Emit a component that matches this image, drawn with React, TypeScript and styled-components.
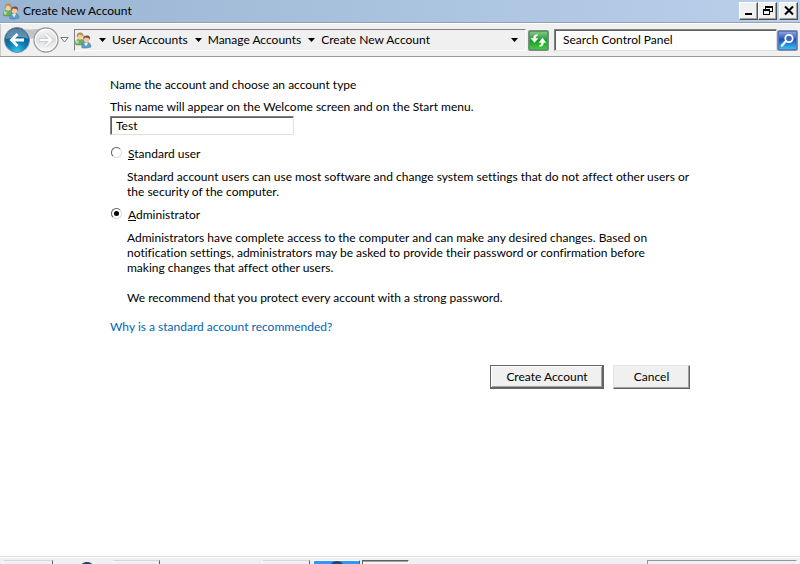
import React, { useState } from "react";
import styled, { createGlobalStyle, css } from "styled-components";

const GlobalStyle = createGlobalStyle`
  *, *::before, *::after { box-sizing: border-box; }
  html, body { margin: 0; padding: 0; background: #fff; }
  body, button, input {
    font-family: Lato, "Open Sans", sans-serif;
    font-size: 12px;
    line-height: 15px;
    font-variant-ligatures: none;
    color: #000;
  }
`;

const Window = styled.div`
  display: flex;
  flex-direction: column;
  min-height: 100vh;
`;

const TitleBar = styled.header`
  display: flex;
  align-items: center;
  height: 22px;
  padding: 0 2px 0 3px;
  background: linear-gradient(90deg, #9ab5d3, #b9d0ea);
`;

const Title = styled.h1`
  flex: 1;
  margin: 0 0 0 3px;
  padding-bottom: 2px;
  font-size: 12px;
  font-weight: 400;
  line-height: 15px;
`;

const WindowButtons = styled.div`
  display: flex;
`;

const WindowButton = styled.button<{ $spaced?: boolean }>`
  display: flex;
  align-items: center;
  justify-content: center;
  width: 19px;
  height: 18px;
  margin-left: ${(p) => (p.$spaced ? "2px" : "0")};
  padding: 0 0 1px;
  border: 1px solid;
  border-color: #fff #505050 #505050 #fff;
  background: #f0f0f0;
  box-shadow: inset -1px -1px #a0a0a0;
`;

const NavBar = styled.nav`
  display: flex;
  align-items: center;
  height: 35px;
  padding: 1px 2px 0 4px;
  border-top: 1px solid #94a0ae;
  border-bottom: 1px solid #989898;
  background: #f0f0f0;
  box-shadow: inset 0 1px #fff, inset 1px 0 #c8c8c8;
`;

const History = styled.div`
  display: flex;
  align-items: center;
  width: 70px;
  flex: none;
`;

const RoundButton = styled.button`
  display: block;
  width: 28px;
  height: 28px;
  padding: 0;
  border: 0;
  border-radius: 50%;
  background: none;
`;

const ArrowButton = styled.button<{ $narrow?: boolean }>`
  display: flex;
  align-items: center;
  justify-content: center;
  width: ${(p) => (p.$narrow ? "9px" : "13px")};
  height: 18px;
  padding: 0;
  border: 0;
  background: none;
`;

const AddressBar = styled.div`
  display: flex;
  align-items: center;
  flex: 2 1 452px;
  min-width: 0;
  height: 22px;
  padding: 0 4px 0 0;
  border: 1px solid;
  border-color: #808080 #fff #fff #808080;
`;

const Crumbs = styled.ol`
  display: flex;
  align-items: center;
  flex: 1;
  min-width: 0;
  margin: 0;
  padding: 0 0 0 4px;
  list-style: none;
`;

const Crumb = styled.li`
  display: flex;
  align-items: center;
  white-space: nowrap;
`;

const CrumbLink = styled.a`
  padding: 0 4px 2px 3px;
  color: #000;
  text-decoration: none;
`;

const SquareButton = styled.button<{ $gap?: boolean }>`
  flex: none;
  display: block;
  width: 21px;
  height: 21px;
  margin-left: ${(p) => (p.$gap ? "2px" : "0")};
  margin-right: ${(p) => (p.$gap ? "5px" : "0")};
  padding: 0;
  border: 0;
  background: none;
`;

const sunken = css`
  border: 1px solid;
  border-color: #808080 #e0e0e0 #e0e0e0 #808080;
  border-radius: 0;
  background: #fff;
  box-shadow: inset 1px 1px #606060;
  outline: none;
`;

const SearchInput = styled.input`
  ${sunken}
  flex: 1 1 223px;
  min-width: 0;
  height: 22px;
  padding: 0 8px 2px;
  &::placeholder { color: #000; opacity: 1; }
`;

const Main = styled.main`
  flex: 1;
  padding: 20px 16px 24px;
`;

const Form = styled.form`
  max-width: 580px;
  margin: 0 auto;
`;

const Heading = styled.h2`
  margin: 0 0 7px;
  font-size: 12px;
  font-weight: 400;
  line-height: 15px;
`;

const NameLabel = styled.label`
  display: block;
  margin-bottom: 2px;
`;

const NameInput = styled.input`
  ${sunken}
  display: block;
  width: 184px;
  height: 19px;
  margin-bottom: 11px;
  padding: 0 5px 1px;
`;

const Option = styled.div`
  margin-bottom: 8px;
`;

const OptionLabel = styled.label`
  display: flex;
  align-items: center;
  width: fit-content;
`;

const Radio = styled.input`
  appearance: none;
  display: grid;
  place-items: center;
  width: 11px;
  height: 11px;
  margin: 0 6px 2px 1px;
  border: 1px solid;
  border-color: #606060 #dcdcdc #dcdcdc #606060;
  border-radius: 50%;
  background: #fff;

  &:checked::before {
    content: "";
    width: 5px;
    height: 5px;
    border-radius: 50%;
    background: #000;
  }
`;

const Description = styled.p`
  margin: 8px 0 0 17px;
`;

const Advice = styled.p`
  margin: 15px 0 14px 17px;
`;

const HelpLink = styled.a`
  color: #0066b5;
  text-decoration: none;
`;

const Actions = styled.div`
  display: flex;
  justify-content: flex-end;
  gap: 9px;
  margin-top: 31px;
`;

const PushButton = styled.button<{ $primary?: boolean }>`
  min-width: ${(p) => (p.$primary ? "114px" : "77px")};
  height: 24px;
  padding: 0 14px 1px;
  border: 1px solid;
  border-color: ${(p) => (p.$primary ? "#646464" : "#e3e3e3 #646464 #646464 #e3e3e3")};
  background: #f0f0f0;
  box-shadow: ${(p) =>
    p.$primary
      ? "inset -1px -1px #646464, inset 1px 1px #fff, inset -2px -2px #a0a0a0"
      : "inset -1px -1px #a0a0a0"};
`;

const TaskBar = styled.footer`
  display: grid;
  grid-template-columns: 50px 60px 47px 102px 48px 3px 47px 2px 47px 1fr 150px;
  height: 8px;
  padding: 3px 3px 0;
  border-top: 1px solid #dce2e2;
  background: #f0f0f2;
  box-shadow: inset 0 1px #fff;
  overflow: hidden;
`;

const Task = styled.div<{ $look: "raised" | "blue" | "pressed" | "tray" }>`
  display: flex;
  justify-content: center;
  border-style: solid;
  border-width: 1px 1px 0;
  ${(p) => p.$look === "raised" && css`border-color: #d8d8d8 #606060 #606060 #fff;`}
  ${(p) => p.$look === "blue" && css`border-color: #fff #606060 #606060 #fff; background: #3296fa;`}
  ${(p) => p.$look === "pressed" && css`border-color: #606060 #fff #fff #606060; background: #f6f6f6; box-shadow: inset 0 1px #a0a0a0;`}
  ${(p) => p.$look === "tray" && css`border-color: #909898 #fff #fff #909898;`}
`;

const TaskSlot = styled.div`
  display: flex;
  justify-content: center;
  padding: 2px 0 0 7px;
`;

const PeopleIcon = () => (
  <svg width="17" height="17" viewBox="0 0 17 17" aria-hidden="true">
    <path d="M.5 12C.5 8 2 7 5 7s5 2 5 5l-4 1H1z" fill="#6fac5c" stroke="#56804d" strokeWidth=".5" />
    <path d="M1 8l3 1-1 3-2-1z" fill="#b4dd9f" />
    <ellipse cx="5" cy="4.5" rx="2.5" ry="3.2" fill="#f1cfa9" />
    <path d="M2 6C1 2 3 .5 5 .5c3 0 4 2 3.5 5L7 3.5 4 2.5z" fill="#b39450" />
    <path d="M7 16c-1-4 1-6 4-6s5 2 5 5l-4 1z" fill="#5c9cc6" stroke="#4472a0" strokeWidth=".5" />
    <path d="M9 11l2 3.5 2-3.5z" fill="#e2f0f5" />
    <ellipse cx="11.5" cy="7.5" rx="2.6" ry="3.4" fill="#f0c8a2" />
    <path d="M8.5 8C7.5 4 10 3.5 12 3.5c3 0 3.5 2 2.5 4.5l-1-2-3.5-.5z" fill="#7b5436" />
  </svg>
);

const BackIcon = () => (
  <svg width="28" height="28" viewBox="0 0 28 28" aria-hidden="true">
    <defs>
      <radialGradient id="back" cx=".5" cy=".95" r=".9">
        <stop offset="0" stopColor="#38c4ee" />
        <stop offset=".45" stopColor="#087ab4" />
        <stop offset="1" stopColor="#14436f" />
      </radialGradient>
    </defs>
    <circle cx="13" cy="14" r="12.5" fill="url(#back)" stroke="#7890a0" />
    <path d="M2 13C2 6 7 2.5 13 2.5S24 6 24 13c-7-3-14-2-22 0z" fill="#fff" opacity=".32" />
    <path d="M20 14H8m5.500-6l-6 6 6 6" fill="none" stroke="#fff" strokeWidth="2.8" />
  </svg>
);

const ForwardIcon = () => (
  <svg width="28" height="28" viewBox="0 0 28 28" overflow="visible" aria-hidden="true">
    <defs>
      <linearGradient id="forward" x2="0" y2="1">
        <stop offset="0" stopColor="#f8f8f8" />
        <stop offset=".5" stopColor="#dedfe1" />
        <stop offset="1" stopColor="#fafafa" />
      </linearGradient>
    </defs>
    <path d="M-9 3C-2 4 6 3 12 2L2 12C0 13-1 13-2.5 12C-3.5 8-6 5-9 3z" fill="#c2c3c5" />
    <circle cx="14" cy="14" r="12" fill="url(#forward)" stroke="#9a9c9f" strokeWidth="1.3" />
    <circle cx="14" cy="14" r="10.8" fill="none" stroke="#fff" />
    <path d="M7 14h12m-5.500-6l6 6-6 6" fill="none" stroke="#c4c6c9" strokeWidth="3.6" />
    <path d="M7.500 14h12m-6-6l6 6-6 6" fill="none" stroke="#fbfbfb" strokeWidth="2.2" />
  </svg>
);

const DownArrow = () => (
  <svg width="7" height="4" viewBox="0 0 7 4" aria-hidden="true">
    <path d="M0 0h7L3.5 4z" fill="#000" />
  </svg>
);

const OutlineArrow = () => (
  <svg width="9" height="6" viewBox="0 0 9 6" aria-hidden="true">
    <path d="M.8.5h7.400L4.500 5z" fill="#fff" stroke="#70757c" />
  </svg>
);

const RefreshIcon = () => (
  <svg width="21" height="21" viewBox="0 0 21 21" aria-hidden="true">
    <defs>
      <linearGradient id="refresh" x2="0" y2="1">
        <stop offset="0" stopColor="#8bc68d" />
        <stop offset=".5" stopColor="#159c28" />
        <stop offset="1" stopColor="#48cb43" />
      </linearGradient>
    </defs>
    <rect x=".5" y=".5" width="20" height="20" rx="1" fill="#eee" stroke="#7d8d80" />
    <rect x="1.5" y="1.5" width="18" height="18" fill="url(#refresh)" stroke="#4c9f50" />
    <path d="M9.5 4.5C6.500 4.500 5.500 6 5.500 8.500H3l3.500 4 3.500-4H7.500C7.500 7 8 6 9.500 5.500zM11.500 16.500c3 0 4-2 4-4H18l-3.500-4.500-3.500 4.500h2.500c0 1.500-.5 2.500-2 3z" fill="#fff" stroke="#fff" strokeWidth=".4" />
  </svg>
);

const SearchIcon = () => (
  <svg width="21" height="21" viewBox="0 0 21 21" aria-hidden="true">
    <defs>
      <linearGradient id="search" x2="0" y2="1">
        <stop offset="0" stopColor="#8da9dd" />
        <stop offset=".45" stopColor="#1e51bd" />
        <stop offset="1" stopColor="#35c4f0" />
      </linearGradient>
    </defs>
    <rect x=".5" y=".5" width="20" height="20" rx="1" fill="#eee" stroke="#8090aa" />
    <rect x="1.5" y="1.5" width="18" height="18" fill="url(#search)" stroke="#5877b8" />
    <path d="M9.5 10.5L5 15.5" stroke="#e7f2ff" strokeWidth="2.6" strokeLinecap="round" />
    <circle cx="12" cy="8.5" r="3.7" fill="#3d65c5" stroke="#fff" strokeWidth="1.8" />
  </svg>
);

const MinimizeIcon = () => (
  <svg width="12" height="11" viewBox="0 0 12 11" aria-hidden="true">
    <path d="M2 8h7v2H2z" />
  </svg>
);

const RestoreIcon = () => (
  <svg width="12" height="11" viewBox="0 0 12 11" aria-hidden="true">
    <path d="M3 1h8v6H8V6h2V3H4v1H3zM1 4h7v6H1zm1 2v3h5V6z" fillRule="evenodd" />
  </svg>
);

const CloseIcon = () => (
  <svg width="12" height="11" viewBox="0 0 12 11" aria-hidden="true">
    <path d="M2 1.5l8 8M10 1.5l-8 8" stroke="#000" strokeWidth="2" />
  </svg>
);

const OrbIcon = () => (
  <svg width="16" height="3" viewBox="0 0 16 3" aria-hidden="true">
    <path d="M2 3C5-1 11-1 14 3z" fill="#284468" />
  </svg>
);

const crumbs = ["User Accounts", "Manage Accounts", "Create New Account"];

export default function App() {
  const [name, setName] = useState("Test");
  const [kind, setKind] = useState("admin");

  return (
    <Window>
      <GlobalStyle />
      <TitleBar>
        <PeopleIcon />
        <Title>Create New Account</Title>
        <WindowButtons>
          <WindowButton aria-label="Minimize"><MinimizeIcon /></WindowButton>
          <WindowButton aria-label="Restore"><RestoreIcon /></WindowButton>
          <WindowButton aria-label="Close" $spaced><CloseIcon /></WindowButton>
        </WindowButtons>
      </TitleBar>
      <NavBar aria-label="Address">
        <History>
          <RoundButton aria-label="Back"><BackIcon /></RoundButton>
          <RoundButton aria-label="Forward"><ForwardIcon /></RoundButton>
          <ArrowButton aria-label="Recent pages" $narrow><OutlineArrow /></ArrowButton>
        </History>
        <AddressBar>
          <PeopleIcon />
          <Crumbs>
            {crumbs.map((text) => (
              <Crumb key={text}>
                <ArrowButton aria-label={`Locations before ${text}`}><DownArrow /></ArrowButton>
                <CrumbLink href="#">{text}</CrumbLink>
              </Crumb>
            ))}
          </Crumbs>
          <ArrowButton aria-label="Previous locations"><DownArrow /></ArrowButton>
        </AddressBar>
        <SquareButton aria-label="Refresh" $gap><RefreshIcon /></SquareButton>
        <SearchInput type="text" aria-label="Search Control Panel" placeholder="Search Control Panel" />
        <SquareButton aria-label="Search"><SearchIcon /></SquareButton>
      </NavBar>
      <Main>
        <Form onSubmit={(e) => e.preventDefault()}>
          <Heading>Name the account and choose an account type</Heading>
          <NameLabel htmlFor="name">This name will appear on the Welcome screen and on the Start menu.</NameLabel>
          <NameInput id="name" type="text" value={name} onChange={(e) => setName(e.target.value)} />
          <Option>
            <OptionLabel>
              <Radio type="radio" name="kind" checked={kind === "standard"} onChange={() => setKind("standard")} />
              <span><u>S</u>tandard user</span>
            </OptionLabel>
            <Description>
              Standard account users can use most software and change system settings that do not affect other users or
              the security of the computer.
            </Description>
          </Option>
          <Option>
            <OptionLabel>
              <Radio type="radio" name="kind" checked={kind === "admin"} onChange={() => setKind("admin")} />
              <span><u>A</u>dministrator</span>
            </OptionLabel>
            <Description>
              Administrators have complete access to the computer and can make any desired changes. Based on<br />
              notification settings, administrators may be asked to provide their password or confirmation before<br />
              making changes that affect other users.
            </Description>
            <Advice>We recommend that you protect every account with a strong password.</Advice>
          </Option>
          <HelpLink href="#">Why is a standard account recommended?</HelpLink>
          <Actions>
            <PushButton type="submit" $primary>Create Account</PushButton>
            <PushButton type="button">Cancel</PushButton>
          </Actions>
        </Form>
      </Main>
      <TaskBar>
        <Task $look="raised" />
        <TaskSlot><OrbIcon /></TaskSlot>
        <Task $look="raised" />
        <TaskSlot />
        <Task $look="raised" />
        <TaskSlot />
        <Task $look="blue"><OrbIcon /></Task>
        <TaskSlot />
        <Task $look="pressed" />
        <TaskSlot />
        <Task $look="tray" />
      </TaskBar>
    </Window>
  );
}
